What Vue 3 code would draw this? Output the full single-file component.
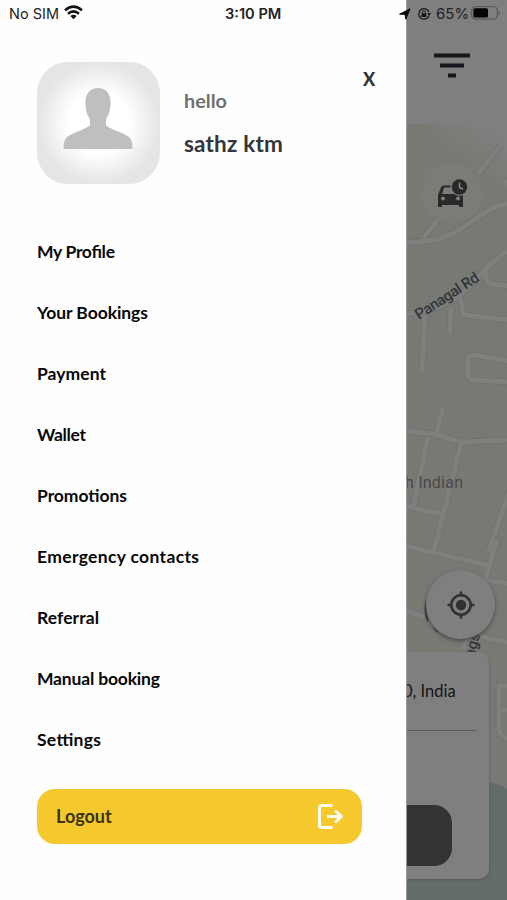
<script setup>
import { ref } from 'vue';

const open = ref(true);
const items = [
    { label: 'My Profile', width: 78 },
    { label: 'Your Bookings', width: 111 },
    { label: 'Payment', width: 69 },
    { label: 'Wallet', width: 49 },
    { label: 'Promotions', width: 90 },
    { label: 'Emergency contacts', width: 162 },
    { label: 'Referral', width: 62 },
    { label: 'Manual booking', width: 123 },
    { label: 'Settings', width: 64 },
];

const roads = [
    'M406 243L436 240Q448 237 461 229L483 214Q494 206 510 203',
    'M478 174L501 145M423 238L438 220M510 177L505 184',
    'M507 251L486 268Q465 294 449 302Q430 312 406 314M486 270Q484 280 491 284L510 286M460 297L464 315 510 320M425 315L422 370M451 307L450 334',
    'M510 361L474 355Q467 354 468 361V374Q468 380 475 380L510 382',
    'M406 431L434 434 461 442 510 440M443 407L436 435M428 437L413 508 442 514M461 444L434 550M510 490L488 552M406 546L440 554 487 565M413 508L406 505',
    'M497 540L485 580 510 584M406 610L430 620M463 650Q465 638 475 635L510 643',
    'M510 686H499V730Q501 738 510 739M500 710H510',
];
</script>

<template>
    <div class="screen">
        <header class="status">
            <span class="carrier">No SIM</span>
            <svg class="wifi" width="19" height="15" viewBox="0 0 19 15">
                <g fill="none" stroke="#111" stroke-width="2.5">
                    <path d="M1 5.4Q9.5-2.1 18 5.4" />
                    <path d="M4 8.8Q9.5 4 15 8.8" />
                </g>
                <path d="M6.3 11Q9.5 8.4 12.7 11L9.5 14.3z" fill="#111" />
            </svg>
            <span class="time">3:10 PM</span>
            <svg class="arrow" width="12" height="12" viewBox="0 0 12 12">
                <path d="M.6 6.2L11 .8 6.8 11.2 6 6.3z" fill="#080808" stroke="#080808" stroke-linejoin="round" />
            </svg>
            <svg class="lock" width="14" height="14" viewBox="0 0 14 14">
                <path d="M12.1 8.5A5.3 5.3 0 1 1 12 5" fill="none" stroke="#171717" stroke-width="1.3" />
                <path d="M10.2 6h3.8l-1.9 2.8z" fill="#171717" />
                <rect x="4.400" y="6.2" width="5" height="3.8" rx=".6" fill="#171717" />
                <path d="M5.3 6.5V5.3a1.6 1.6 0 0 1 3.2 0v1.2" fill="none" stroke="#171717" />
            </svg>
            <span class="percent">65%</span>
            <svg class="battery" width="30" height="14" viewBox="0 0 30 14">
                <rect x=".7" y=".7" width="25.6" height="12.4" rx="3.4" fill="none" stroke="#515151" />
                <rect x="2.4" y="2.3" width="14.6" height="9.2" rx="1.6" fill="#050505" />
                <path d="M27.7 4.7q2 2.2 0 4.6z" fill="#515151" />
            </svg>
        </header>

        <nav v-if="open" class="drawer">
            <div class="profile">
                <div class="avatar">
                    <svg width="70" height="63" viewBox="0 0 70 63">
                        <path d="M35 1C27 1 22.5 7 22.5 15C22.5 23 24 28 27 32V38C24 42 11 45 4 50Q.5 53 .5 62H69.5Q69.5 53 66 50C59 45 46 42 43 38V32C46 28 47.5 23 47.5 15C47.5 7 43 1 35 1Z" fill="#bfbfbf" />
                    </svg>
                </div>
                <div class="names">
                    <p class="hello">hello</p>
                    <p class="name">sathz ktm</p>
                </div>
                <button class="close" @click="open = false">X</button>
            </div>

            <ul class="menu">
                <li v-for="item in items" :key="item.label">
                    <svg :width="item.width + 2" height="24">
                        <text x="0" y="17" :textLength="item.width" lengthAdjust="spacing">{{ item.label }}</text>
                    </svg>
                </li>
            </ul>

            <button class="logout">
                <span>Logout</span>
                <svg width="27" height="27" viewBox="0 0 27 27" fill="none" stroke="#fffdf0" stroke-width="3" stroke-linejoin="round">
                    <path d="M15.5 2.5H5Q2.5 2.5 2.5 5V22Q2.5 24.5 5 24.5H15.5M10 13.5H24.5M18 7.5L24.5 13.5 18 19.5" />
                </svg>
            </button>
        </nav>

        <main class="page">
            <svg class="map" width="101" height="900" viewBox="406 0 101 900">
                <defs>
                    <linearGradient id="corner" x1="0" y1="1" x2="1" y2="0">
                        <stop offset=".55" stop-color="#797974" />
                        <stop offset=".85" stop-color="#7e7e7d" />
                    </linearGradient>
                </defs>
                <path d="M406 200H507V900H406Z" fill="#797974" />
                <path d="M406 124H448Q507 126 507 166V201H406Z" fill="url(#corner)" />
                <path d="M489 782Q500 784 507 789V900H406V870H489Z" fill="#646b6b" />
                <g class="edge">
                    <path v-for="road in roads" :key="road" :d="road" />
                </g>
                <g class="roads">
                    <path v-for="road in roads" :key="road" :d="road" />
                </g>
                <text x="419" y="320" transform="rotate(-33 419 320)" textLength="73" class="road-name">Panagal Rd</text>
                <text x="405" y="488" textLength="58" class="place">h Indian</text>
                <text x="474" y="658" transform="rotate(-75 474 658)" class="road-name">ags</text>
                <path d="M427 601Q424 610 428 621M434 627L438 632" fill="none" stroke="#363b3d" stroke-width="2.5" />
            </svg>

            <svg class="filter" width="36" height="25" viewBox="0 0 36 25" fill="#17171d">
                <path d="M0 .5H36V4.5H0zM6 10.5H30V14.5H6zM14 20.500H22V24.5H14z" />
            </svg>

            <div class="ride">
                <svg width="31" height="29" viewBox="0 0 31 29">
                    <path d="M4 8.5Q5 6.500 7 6.500H14V8.500H7L5 15H26V27.500Q26 28 25 28H23Q22 28 22 27V26H5V27Q5 28 4 28H2Q1 28 1 27V16Z" fill="#292929" />
                    <circle cx="6" cy="19.5" r="2" fill="#7b7b78" />
                    <circle cx="21" cy="19.5" r="2" fill="#7b7b78" />
                    <circle cx="22.5" cy="8" r="9" fill="#7b7b78" />
                    <circle cx="22.5" cy="8" r="7.700" fill="#292929" />
                    <path d="M22.5 3.5V8.5L26 10" fill="none" stroke="#888" stroke-width="1.4" />
                </svg>
            </div>

            <div class="locate">
                <svg width="28" height="28" viewBox="0 0 28 28">
                    <circle cx="14" cy="14" r="9.7" fill="none" stroke="#303030" stroke-width="2.5" />
                    <circle cx="14" cy="14" r="5.2" fill="#303030" />
                    <path d="M14 .5V4M14 24V27.5M.5 14H4M24 14H27.5" stroke="#303030" stroke-width="2.5" />
                </svg>
            </div>

            <section class="card">
                <p class="address">0, India</p>
                <div class="book"></div>
            </section>
        </main>
    </div>
</template>

<style>
body {
    margin: 0;
    background: white;
}
</style>

<style scoped>
* {
    box-sizing: border-box;
}

p,
ul {
    margin: 0;
    padding: 0;
}

button {
    border: 0;
    padding: 0;
    background: none;
    cursor: pointer;
}

svg {
    display: block;
    flex: none;
}

.screen {
    position: relative;
    display: flex;
    width: 507px;
    height: 900px;
    overflow: hidden;
    background: #fefefe;
    font-family: Lato, "Liberation Sans", sans-serif;
}

.status {
    position: absolute;
    z-index: 3;
    top: 0;
    left: 0;
    display: flex;
    align-items: center;
    width: 507px;
    height: 27px;
    padding-left: 9px;
    font-family: Inter, sans-serif;
    font-size: 14.5px;
    color: #222;
    white-space: nowrap;
}

.carrier {
    width: 55px;
}

.wifi {
    margin-top: -2px;
}

.time {
    width: 58px;
    margin-left: 142px;
    font-size: 14.6px;
    font-weight: 600;
}

.arrow {
    margin-left: 116px;
}

.lock {
    margin-left: 6px;
}

.percent {
    width: 33px;
    margin-left: 5px;
    font-size: 15px;
}

.battery {
    margin-left: 2px;
    margin-top: -1px;
}

.drawer {
    width: 406px;
    flex: none;
    padding: 62px 0 0 37px;
}

.profile {
    display: flex;
    height: 122px;
}

.avatar {
    display: flex;
    justify-content: center;
    width: 123px;
    height: 122px;
    padding-top: 25px;
    padding-right: 2px;
    border-radius: 31px;
    background: radial-gradient(circle, #fff 36%, #f4f4f4 50%, #e5e5e5 70%);
}

.names {
    width: 179px;
    padding-left: 24px;
}

.hello {
    margin-top: 26px;
    font-size: 19.8px;
    line-height: 24px;
    font-weight: 700;
    color: #707070;
}

.name {
    margin-top: 18px;
    font-size: 22.5px;
    line-height: 28px;
    font-weight: 700;
    letter-spacing: .2px;
    color: #35353b;
}

.close {
    align-self: flex-start;
    height: 34px;
    margin-left: 24px;
    font: 900 18px Lato, sans-serif;
    color: #333;
}

.menu {
    margin-top: 38px;
    list-style: none;
}

.menu li {
    display: flex;
    align-items: center;
    height: 61.1px;
}

.menu text {
    font-size: 17.5px;
    font-weight: 700;
    fill: #080808;
}

.logout {
    display: flex;
    align-items: center;
    justify-content: space-between;
    width: 325px;
    height: 55px;
    margin-top: 17px;
    padding: 0 18px 0 19px;
    border-radius: 18px;
    background: #f5c92d;
    font: 700 18px Lato, sans-serif;
    color: #3b3513;
}

.page {
    position: relative;
    display: flex;
    flex-direction: column;
    width: 101px;
    height: 900px;
    overflow: hidden;
    border-left: 1px solid #9a9a9a;
    background: #7f7f7f;
}

.map {
    position: absolute;
    top: 0;
    left: -1px;
}

.roads path {
    fill: none;
    stroke: #7f7f7d;
    stroke-width: 5;
    stroke-linejoin: round;
}

.edge path {
    fill: none;
    stroke: #71716e;
    stroke-width: 6.6;
    stroke-linejoin: round;
}

.road-name {
    font: 500 15px Roboto, sans-serif;
    fill: #30363a;
}

.place {
    font: 16px Roboto, sans-serif;
    fill: #484848;
}

.filter,
.ride,
.locate,
.card {
    position: relative;
    flex: none;
}

.filter {
    margin: 53px 0 0 27px;
}

.ride {
    display: flex;
    align-items: center;
    justify-content: center;
    width: 60px;
    height: 60px;
    margin: 85px 0 0 15px;
    border-radius: 50%;
    background: #7b7b78;
}

.locate {
    z-index: 2;
    display: flex;
    align-items: center;
    justify-content: center;
    width: 69px;
    height: 69px;
    margin: 347px 0 0 19px;
    border-radius: 50%;
    background: #7f7f7f;
    box-shadow: 0 2px 4px #4a4a48;
}

.card {
    width: 82px;
    height: 227px;
    margin-top: 13px;
    border-radius: 0 10px 10px 0;
    background: #7f7f7f;
    box-shadow: 0 1px 3px #565958;
}

.address {
    width: 69px;
    height: 79px;
    padding-top: 28px;
    border-bottom: 1px solid #5c5c5c;
    font: 16.5px/22px Lato, sans-serif;
    color: #151515;
    text-indent: -4px;
    white-space: nowrap;
}

.book {
    width: 45px;
    height: 61px;
    margin-top: 74px;
    border-radius: 0 18px 18px 0;
    background: #333;
}
</style>
